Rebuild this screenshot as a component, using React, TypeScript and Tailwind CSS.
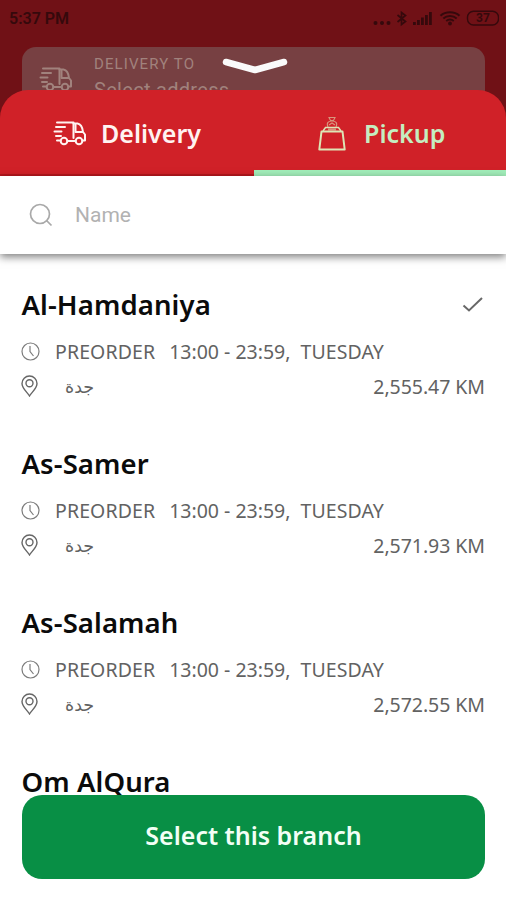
import React from "react";

type Branch = { name: string; distance?: string; selected?: boolean };

const branches: Branch[] = [
  { name: "Al-Hamdaniya", distance: "2,555.47 KM", selected: true },
  { name: "As-Samer", distance: "2,571.93 KM" },
  { name: "As-Salamah", distance: "2,572.55 KM" },
  { name: "Om AlQura" },
];

function Truck({ className }: { className: string }) {
  return (
    <svg className={className} width="34" height="25" viewBox="0 0 34 25" fill="none" stroke="currentColor" strokeWidth="2" strokeLinecap="round" strokeLinejoin="round">
      <path d="M4 1.500H20.500V17M3 6H12M1.500 10.500H8.500M3 15H8M4 19.500H7.500" />
      <path d="M20.500 2.500H24.500C27.500 3 29.500 6.500 30 11H22.500V4M30 11L32 13.500V19.500H29.500M14.500 20H22.500" />
      <circle cx="11" cy="20" r="3.300" />
      <circle cx="26" cy="20" r="3.300" />
    </svg>
  );
}

function Bag() {
  return (
    <svg className="mt-1 shrink-0 text-[#dde5b5]" width="28" height="36" viewBox="0 0 28 36" fill="none" stroke="currentColor">
      <path d="M3.500 15.500H24.500L26.700 33.500H1.300Z" strokeWidth="2" strokeLinejoin="round" />
      <path d="M5 15L7.500 11.500H20.500L23 15" strokeWidth="1.500" />
      <path d="M10 13.500H18" strokeWidth="2" opacity=".6" />
      <path d="M10 11C8 6.500 10.500 5 14 5S20 6.500 18 11M11 1.500H17L15.500 4.500H12.500ZM11 9L14 7L17 9" strokeWidth="1.100" opacity=".6" />
    </svg>
  );
}

function StatusIcons() {
  return (
    <svg width="126" height="20" viewBox="0 0 126 20" fill="none" stroke="#35090c" strokeWidth="1.700">
      <g fill="#35090c" stroke="none">
        <circle cx="2.500" cy="14" r="2" /><circle cx="9" cy="14" r="2" /><circle cx="15.500" cy="14" r="2" />
        <rect x="40" y="13" width="2.800" height="3" /><rect x="44" y="11" width="2.800" height="5" />
        <rect x="48" y="8.500" width="2.800" height="7.500" /><rect x="52" y="6" width="2.800" height="10" />
        <rect x="56" y="3" width="2.800" height="13" />
        <circle cx="77" cy="14.500" r="1.900" />
      </g>
      <path d="M24.500 6L32.500 12.500L28.500 15.500V3.500L32.500 6.500L24.500 13" />
      <path d="M67.500 6.800C72.500 2.200 81.500 2.200 86.500 6.800M70.300 9.500C74 6.300 80 6.300 83.700 9.500M73.200 12C75.400 10.300 78.600 10.300 80.800 12" strokeWidth="2" />
      <rect x="94.500" y="2.300" width="31" height="13.700" rx="6" strokeWidth="1.400" />
      <text x="110" y="13.300" textAnchor="middle" fill="#35090c" stroke="none" fontFamily="Roboto, sans-serif" fontSize="12" fontWeight="700">37</text>
    </svg>
  );
}

function BranchRow({ branch }: { branch: Branch }) {
  return (
    <article className="h-[159px] shrink-0 px-[21px] text-[#626262]">
      <div className="flex h-10 items-center justify-between">
        <h2 className="pl-[0.5px] text-[27.5px] font-[560] leading-10 tracking-[0.1px] text-[#0b0b0b]">{branch.name}</h2>
        {branch.selected && (
          <svg width="24" height="20" viewBox="0 0 24 20" fill="none" stroke="#686868" strokeWidth="2">
            <path d="M2.500 10.500L8 15.500L21 3" />
          </svg>
        )}
      </div>
      {branch.distance && (
        <>
          <div className="mt-[10px] flex h-[34px] items-center whitespace-nowrap text-[19.5px]">
            <svg width="19" height="19" viewBox="0 0 19 19" fill="none" stroke="#7c7c7c" strokeWidth="1.200" className="mb-[2px]">
              <circle cx="9.500" cy="9.500" r="8.500" /><path d="M9 4V9.500L12.500 14" />
            </svg>
            <span className="ml-[15px] tracking-[0.1px]">PREORDER</span>
            <span className="ml-[14px]">13:00 - 23:59,</span>
            <span className="ml-[10px] tracking-[0.1px]">TUESDAY</span>
          </div>
          <div className="flex h-9 items-center text-[19.5px]">
            <svg width="17" height="22" viewBox="0 0 17 22" fill="none" stroke="#666" strokeWidth="1.400" className="mb-[3px]">
              <path d="M8.500 21C6.500 17.500 1 13.500 1 8.500A7.500 7.500 0 0 1 16 8.500C16 13.500 10.500 17.500 8.500 21Z" />
              <circle cx="8.500" cy="8.300" r="3.500" />
            </svg>
            <span dir="rtl" className="ml-[27px] font-['DejaVu_Sans',sans-serif] text-[17.5px]">جدة</span>
            <span className="ml-auto tracking-[-0.05px]">{branch.distance}</span>
          </div>
        </>
      )}
    </article>
  );
}

export default function App() {
  return (
    <main className="flex h-[900px] w-[506px] flex-col overflow-hidden bg-white font-['Noto_Sans',sans-serif]">
      <header className="h-[131px] shrink-0 bg-[#701116]">
        <div className="flex h-[47px] items-start justify-between pl-[9px] pr-[7px] pt-[9px]">
          <span className="font-[Roboto,sans-serif] text-[16px] font-semibold leading-5 text-[#35090c]">5:37 PM</span>
          <StatusIcons />
        </div>
        <div className="relative ml-[22px] mr-[21px] h-[84px] rounded-[14px] bg-[#774042]">
          <div className="flex pl-[17px] pt-[7px] text-[#a1827d]">
            <Truck className="mt-[13px] shrink-0" />
            <div className="ml-[21px] font-[Roboto,sans-serif]">
              <p className="text-[15px] leading-5 tracking-[1.100px]">DELIVERY TO</p>
              <p className="mt-[2px] text-[20px] leading-7 tracking-[0.300px]">Select address</p>
            </div>
          </div>
          <svg className="absolute left-[200px] top-[10px]" width="66" height="18" viewBox="0 0 66 18" fill="none" stroke="#fafafa" strokeWidth="6.500" strokeLinecap="round" strokeLinejoin="round">
            <path d="M4 5L33 13L62 5" />
          </svg>
        </div>
      </header>
      <section className="relative -mt-[41px] flex min-h-0 flex-1 flex-col">
        <nav className="flex h-[86px] shrink-0 rounded-t-[28px] bg-[#d02128] text-[25px] font-semibold text-[#fff3f1]">
          <div className="flex w-[254px] items-center border-b-2 border-[#b5171d] pl-[53px] pt-1">
            <Truck className="-mt-[2px] shrink-0" />
            <span className="ml-[14px]">Delivery</span>
          </div>
          <div className="flex flex-1 items-center border-b-[6px] border-[#a1edb9] pl-[64px] pt-1 text-[#c5edc0]">
            <Bag />
            <span className="ml-[18px] pt-1">Pickup</span>
          </div>
        </nav>
        <div className="relative flex h-[78px] shrink-0 items-center bg-white pl-[29px] shadow-[0_3px_8px_rgba(0,0,0,0.5)]">
          <svg width="24" height="24" viewBox="0 0 24 24" fill="none" stroke="#a9a9a9" strokeWidth="1.700">
            <circle cx="11" cy="11" r="9.500" /><path d="M17.500 17.500L22.500 22.500" />
          </svg>
          <span className="ml-[22px] pt-px font-[Roboto,sans-serif] text-[21px] text-[#b2b2b2]">Name</span>
        </div>
        <div className="flex min-h-0 flex-1 flex-col overflow-hidden pt-[31px]">
          {branches.map((b) => <BranchRow key={b.name} branch={b} />)}
        </div>
        <button className="ml-[22px] mr-[21px] mb-[21px] h-[84px] shrink-0 rounded-[20px] bg-[#088f45] pb-[2px] text-[25px] font-semibold text-[#f2fff5]">Select this branch</button>
      </section>
    </main>
  );
}
